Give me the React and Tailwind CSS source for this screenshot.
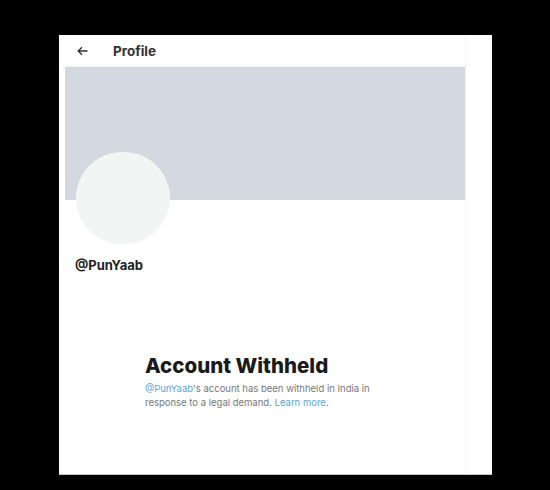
export default function App() {
  return (
    <div className="h-[490px] w-[550px] bg-black pl-[59px] pt-[35px] font-['Inter','Liberation_Sans',sans-serif]">
      <div className="flex h-[440px] w-[433px] border-b border-[#c9c9c9] bg-white">
        <div className="flex w-[407px] flex-col border-r border-[#f0f1f2]">
          <div className="flex h-[32px] items-center border-b border-[#f3f4f5] pl-[18px]">
            <svg width="11" height="10" viewBox="0 0 11 10" fill="none" stroke="#333" strokeWidth="1.4">
              <path d="M10.5 5H1.2M5 1.2L1.2 5L5 8.8" />
            </svg>
            <span className="ml-[25px] text-[13.5px] font-bold leading-[16px] text-[#333]">Profile</span>
          </div>
          <div className="ml-[6px] h-[133px] w-[400px] bg-[#d4d8e0]" />
          <div className="-mt-[48px] ml-[17px] h-[92px] w-[94px] rounded-full bg-[#f3f5f5]" />
          <div className="ml-[16px] mt-[13px] text-[13px] font-bold leading-[16px] text-[#222]">@PunYaab</div>
          <div className="ml-[86px] mt-[79px]">
            <h1 className="text-[20.5px] font-extrabold leading-[27px] text-[#1a1a1a]">Account Withheld</h1>
            <p className="mt-[3px] w-[240px] text-[9.5px] leading-[14px] text-[#73787e]">
              <span className="text-[#5aa6d6]">@PunYaab</span>'s account has been withheld in India in
              response to a legal demand. <span className="text-[#5aa6d6]">Learn more</span>.
            </p>
          </div>
        </div>
      </div>
    </div>
  );
}
